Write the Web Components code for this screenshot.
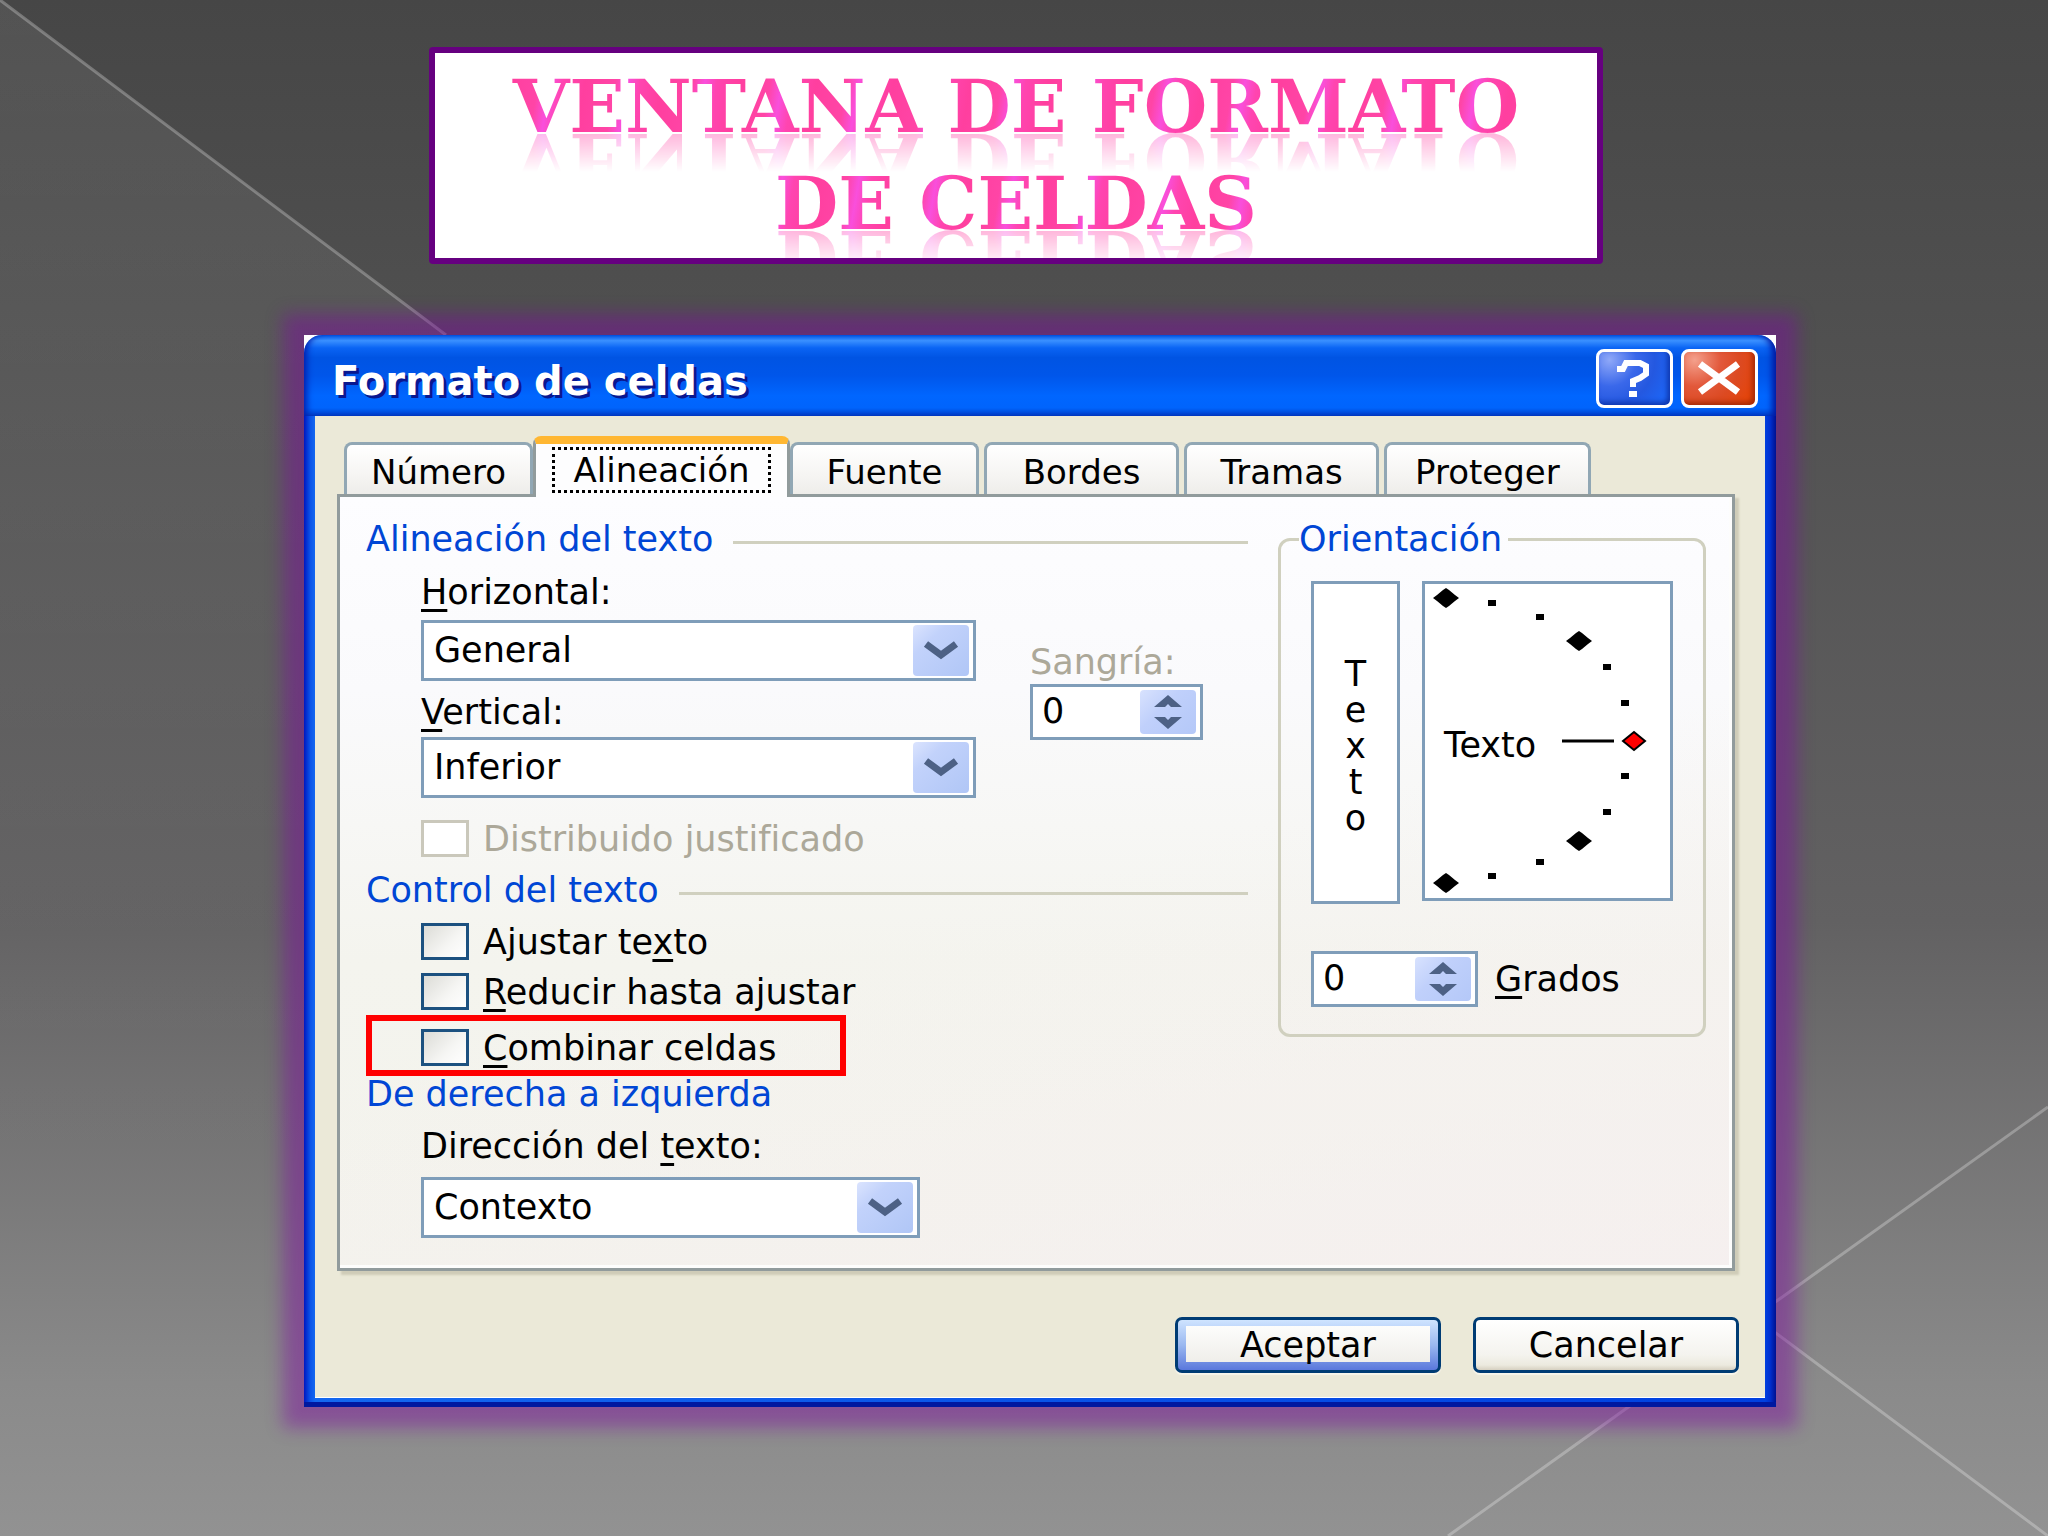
<!DOCTYPE html>
<html lang="es">
<head>
<meta charset="utf-8">
<meta name="viewport" content="width=device-width, initial-scale=1">
<title>Ventana de formato de celdas</title>
<style>
    body {
        margin: 0;
        font-family: "DejaVu Sans", Verdana, sans-serif;
        font-size: 35px;
        line-height: 40px;
        color: #000;
    }
</style>
</head>
<body>
<slide-page>
    <slide-title>
        <span>VENTANA DE FORMATO</span>
        <span>DE CELDAS</span>
    </slide-title>
    <xp-dialog caption="Formato de celdas">
        <xp-tabs>
            <xp-tab slot="tab">Número</xp-tab>
            <xp-tab slot="tab" active>Alineación</xp-tab>
            <xp-tab slot="tab">Fuente</xp-tab>
            <xp-tab slot="tab" wide>Bordes</xp-tab>
            <xp-tab slot="tab" wide>Tramas</xp-tab>
            <xp-tab slot="tab" wide>Proteger</xp-tab>
            <cell-alignment></cell-alignment>
        </xp-tabs>
        <xp-button slot="action" primary>Aceptar</xp-button>
        <xp-button slot="action">Cancelar</xp-button>
    </xp-dialog>
</slide-page>

<script>
class XpElement extends HTMLElement {

    constructor() {
        super();
        this.shadowDOM = this.attachShadow({mode: "open"});
    }

    connectedCallback() {
        this.shadowDOM.innerHTML = `
            <style>
                * { box-sizing: border-box; }
                button, input, select { font: inherit; color: inherit; margin: 0; }
                ::slotted(u) { text-decoration-thickness: 3px; text-underline-offset: 5px; text-decoration-skip-ink: none; }
            </style>
            ${this.render()}`;
    }
}

class SlidePage extends XpElement {
    render() {
        return `
            <style>
                :host {
                    display: block;
                    position: relative;
                    box-sizing: border-box;
                    min-height: 100vh;
                    padding: 47px 272px 120px 304px;
                    background: linear-gradient(#464646, #4f4f4f 20%, #626162 60%, #8a8a8a 90%, #929292);
                    overflow: hidden;
                }
                .lines { position: absolute; left: 0; top: 0; width: 100%; height: 100%; }
                .content { position: relative; display: flex; flex-direction: column; gap: 71px; }
            </style>
            <svg class="lines" viewBox="0 0 2048 1536" preserveAspectRatio="none" fill="none" stroke="#fff" stroke-opacity=".27" stroke-width="3">
                <defs><linearGradient id="haze" x2="0" y2="1">
                    <stop offset="0" stop-color="#fff" stop-opacity=".07"/><stop offset="1" stop-color="#fff" stop-opacity="0"/>
                </linearGradient></defs>
                <path d="M0 0 L1600 1202 H0 Z" fill="url(#haze)" stroke="none"/>
                <path d="M0 0 L446 335 M2048 1107 L1448 1536 M1600 1202 L2048 1536"/>
            </svg>
            <div class="content"><slot></slot></div>`;
    }
}

class SlideTitle extends XpElement {
    render() {
        return `
            <style>
                :host {
                    display: block;
                    margin: 0 173px 0 125px;
                    border: 6px solid #660080;
                    border-radius: 4px;
                    padding: 5px 0 6px;
                    background: #fff;
                    overflow: hidden;
                }
                h1 {
                    margin: 0;
                    font: bold 73px/97px "DejaVu Serif", "Bookman Old Style", serif;
                    text-align: center;
                }
                /* offset folds the mirror image onto the baseline, not the line box */
                ::slotted(span) {
                    display: block;
                    color: transparent;
                    background: repeating-linear-gradient(100deg, #ff3f9f 0, #ff45a6 30px, #f94fdc 42px, #ff45b0 54px, #ff3f9f 76px);
                    -webkit-background-clip: text;
                    background-clip: text;
                    -webkit-box-reflect: below -44px linear-gradient(transparent 36px, rgba(0, 0, 0, .4) 76px);
                }
            </style>
            <h1><slot></slot></h1>`;
    }
}

class XpDialog extends XpElement {
    render() {
        return `
            <style>
                :host {
                    display: block;
                    background: #fff;
                    box-shadow: 0 0 16px 21px rgba(128, 7, 165, .43);
                }
                header {
                    display: flex;
                    align-items: center;
                    gap: 8px;
                    height: 81px;
                    padding: 6px 18px 0 28px;
                    border-radius: 18px 18px 0 0;
                    background: linear-gradient(#0058e8, #3a90ff 7%, #0a64f4 16%, #0054e3 28%, #0056ea 50%, #0066ff 75%, #0064fc 90%, #003cc4);
                    box-shadow: inset 7px 0 6px -4px #0020b0, inset -8px 0 6px -4px #0018a0;
                }
                h2 {
                    flex: 1;
                    margin: 0;
                    padding-top: 4px;
                    font-size: 40px;
                    line-height: 48px;
                    color: #fff;
                    text-shadow: 3px 3px 0 #0a1890;
                }
                header button {
                    width: 77px;
                    height: 59px;
                    padding: 0;
                    border: 3px solid #fff;
                    border-radius: 8px;
                    background: radial-gradient(circle at 15% 15%, #8fa8f8, #3a68ea 35%, #2458e0 60%, #1a6cff);
                    box-shadow: inset -3px -3px 5px #1038b0;
                }
                header button.close {
                    background: radial-gradient(circle at 15% 15%, #f4a08c, #e2583a 35%, #dc4a22 60%, #e84200);
                    box-shadow: inset -3px -3px 5px #a82c08;
                }
                header svg { display: block; width: 100%; height: 100%; }
                .frame {
                    padding: 0 11px 9px;
                    background: linear-gradient(90deg, #0018c0, #0a52e8 6px, #1468f0 11px, #0040e0 calc(100% - 11px), #0030d0 calc(100% - 6px), #001090);
                    box-shadow: inset 0 -5px 0 #0018a0;
                }
                .client {
                    padding: 20px 30px 24px 22px;
                    background: #ebe9d8;
                    border-bottom: 1px solid #fff;
                }
                footer { display: flex; justify-content: flex-end; gap: 32px; margin: 46px -4px 0 0; }
            </style>
            <header>
                <h2>${this.getAttribute("caption")}</h2>
                <button type="button" aria-label="Ayuda">
                    <svg viewBox="0 0 71 53" fill="none" stroke="#fff" stroke-width="6">
                        <path d="M18 17 H24 L27 11 H41 L47 14 V22 L41 26 L34 29 V35"/>
                        <path d="M30 42 H38"/>
                    </svg>
                </button>
                <button type="button" class="close" aria-label="Cerrar">
                    <svg viewBox="0 0 71 53" fill="none" stroke="#fff" stroke-width="7">
                        <path d="M16 12 L54 40 M54 12 L16 40"/>
                    </svg>
                </button>
            </header>
            <div class="frame">
                <div class="client">
                    <slot></slot>
                    <footer><slot name="action"></slot></footer>
                </div>
            </div>`;
    }
}

class XpButton extends XpElement {
    render() {
        return `
            <style>
                :host { display: block; width: 266px; }
                button {
                    display: block;
                    width: 100%;
                    height: 56px;
                    padding: 0;
                    border: 3px solid #003c74;
                    border-radius: 7px;
                    background: linear-gradient(#fff, #f4f3ee 70%, #eceadf 90%, #d6d0c0);
                    box-shadow: 0 2px 1px #f8f6ec;
                }
                :host([primary]) button {
                    background:
                        linear-gradient(#fdfdfc, #efeeea) 8px 6px / calc(100% - 16px) calc(100% - 14px) no-repeat,
                        linear-gradient(#cfe4ff, #9ab8f0 50%, #5a78dc);
                }
            </style>
            <button type="button"><slot></slot></button>`;
    }
}

class XpTab extends XpElement {
    render() {
        return `
            <style>
                :host { display: block; min-width: 189px; font-size: 34px; }
                :host([wide]) { min-width: 195px; }
                button {
                    display: block;
                    width: 100%;
                    height: 52px;
                    padding: 4px 24px 0;
                    border: 3px solid #91a7b4;
                    border-bottom: 0;
                    border-radius: 8px 8px 0 0;
                    background: linear-gradient(#fff, #f6f5f3 60%, #eeedea);
                }
                :host([wide]) button { padding: 4px 28px 0; }
                /* the selected tab hides its neighbours' edges and the panel border below */
                :host([active]) { position: relative; min-width: 257px; margin: 0 -5px -3px; }
                :host([active]) button {
                    height: 61px;
                    padding: 3px 16px 6px;
                    border-color: #919b9c;
                    border-top: 8px solid #ffb732;
                    border-radius: 8px 8px 0 0;
                    background: #fdfdfe;
                }
                :host([active]) span { display: block; border: 3px dotted #000; line-height: 40px; }
            </style>
            <button type="button" role="tab" aria-selected="${this.hasAttribute("active")}"><span><slot></slot></span></button>`;
    }
}

class XpTabs extends XpElement {
    render() {
        return `
            <style>
                :host { display: block; }
                .tabs { display: flex; align-items: flex-end; gap: 5px; padding-left: 7px; }
                .panel {
                    border: 3px solid #919b9c;
                    background: linear-gradient(165deg, rgba(246, 238, 240, 0) 50%, rgba(246, 238, 240, .7)), linear-gradient(#fdfdff, #fafafc 25%, #f4f4ee 60%, #f3f3ec);
                    box-shadow: inset -3px -3px 0 #fdfdfc, 4px 4px 2px #cfccb8;
                }
            </style>
            <div class="tabs" role="tablist"><slot name="tab"></slot></div>
            <div class="panel"><slot></slot></div>`;
    }
}

class XpHeading extends XpElement {
    render() {
        return `
            <style>
                :host { display: flex; align-items: center; gap: 20px; line-height: 36px; color: #0046d5; }
                h3 { margin: 0; font: inherit; white-space: nowrap; }
                i { flex: 1; height: 3px; margin-top: 6px; background: #d0d0bf; }
                :host([plain]) i { display: none; }
            </style>
            <h3><slot></slot></h3><i></i>`;
    }
}

class XpSelect extends XpElement {
    render() {
        return `
            <style>
                :host { display: block; width: 555px; }
                label { display: block; margin-bottom: var(--label-gap, 8px); }
                .box { position: relative; }
                select {
                    display: block;
                    appearance: none;
                    width: 100%;
                    height: 61px;
                    padding: 0 70px 2px 10px;
                    border: 3px solid #7f9db9;
                    border-radius: 0;
                    background: #fff;
                }
                svg { position: absolute; right: 7px; top: 5px; width: 56px; height: 51px; pointer-events: none; }
            </style>
            <label for="field"><slot></slot></label>
            <div class="box">
                <select id="field"><option>${this.getAttribute("value")}</option></select>
                <svg viewBox="0 0 56 51">
                    <defs><linearGradient id="face" x2="1" y2="1">
                        <stop offset="0" stop-color="#dbe4fe"/><stop offset=".3" stop-color="#c2d2fb"/><stop offset="1" stop-color="#b0c6f6"/>
                    </linearGradient></defs>
                    <rect width="56" height="51" rx="4" fill="url(#face)"/>
                    <path d="M13 19 L28 30 L43 19" fill="none" stroke="#4d6185" stroke-width="7"/>
                </svg>
            </div>`;
    }
}

class XpCheck extends XpElement {
    render() {
        const disabled = this.hasAttribute("disabled");
        return `
            <style>
                :host { display: block; }
                label { display: flex; align-items: center; gap: 14px; height: 37px; white-space: nowrap; }
                input {
                    appearance: none;
                    flex: none;
                    width: 48px;
                    height: 37px;
                    margin: 0;
                    border: 3px solid #1c5180;
                    background: linear-gradient(135deg, #dcdcd7, #f6f6f4 60%, #fff);
                }
                :host([disabled]) { color: #aca899; }
                :host([disabled]) input { border-color: #cac8bb; background: #fff; }
                span { padding-top: 2px; line-height: 37px; }
            </style>
            <label><input type="checkbox" ${disabled ? "disabled" : ""}><span><slot></slot></span></label>`;
    }
}

class XpSpin extends XpElement {
    render() {
        return `
            <style>
                :host { display: flex; flex-direction: column; gap: 2px; }
                :host([side]) { flex-direction: row-reverse; justify-content: flex-end; align-items: center; gap: 17px; }
                :host([disabled]) label { color: #aca899; }
                .box {
                    display: flex;
                    width: 173px;
                    height: 56px;
                    padding: 3px 4px 3px 9px;
                    border: 3px solid #7f9db9;
                    background: #fff;
                }
                :host([side]) .box { width: 167px; }
                input { flex: 1; min-width: 0; padding: 0 0 2px; border: 0; background: none; color: #000; }
                .steps {
                    display: flex;
                    flex-direction: column;
                    width: 56px;
                    border-radius: 4px;
                    background: linear-gradient(135deg, #d8e2fe, #c0d0fb 40%, #b4c8f8);
                }
                button { flex: 1; padding: 0; border: 0; background: none; }
                svg { display: block; width: 56px; height: 22px; }
            </style>
            <label for="field"><slot></slot></label>
            <div class="box">
                <input id="field" type="text" inputmode="numeric" value="0">
                <div class="steps">
                    <button type="button" aria-label="Aumentar"><svg viewBox="0 0 56 22"><path d="M28 5 L42 17 H31 L28 14 L25 17 H14 Z" fill="#4d6185"/></svg></button>
                    <button type="button" aria-label="Disminuir"><svg viewBox="0 0 56 22"><path d="M28 17 L42 5 H31 L28 8 L25 5 H14 Z" fill="#4d6185"/></svg></button>
                </div>
            </div>`;
    }
}

class OrientationDial extends XpElement {
    render() {
        const diamonds = [[24, 17], [157, 60], [157, 260], [24, 302]];
        const dots = [[70, 22], [118, 36], [185, 86], [203, 122], [203, 195], [185, 231], [118, 281], [70, 295]];
        return `
            <style>
                :host { display: block; }
                svg { display: block; width: 251px; height: 320px; background: #fff; }
                text { font-size: 35px; }
            </style>
            <svg viewBox="0 0 251 320">
                <rect x="1.5" y="1.5" width="248" height="317" fill="none" stroke="#7f9db9" stroke-width="3"/>
                ${diamonds.map(([x, y]) => `<path transform="translate(${x} ${y})" d="M-13 0 L-9 -3 L-3 -8 L0 -10 L3 -8 L9 -3 L13 0 L9 3 L3 8 L0 10 L-3 8 L-9 3 Z"/>`).join("")}
                ${dots.map(([x, y]) => `<rect x="${x - 4}" y="${y - 3}" width="8" height="6"/>`).join("")}
                <path d="M140 160 H192" stroke="#000" stroke-width="3"/>
                <path d="M201 160 L212 151 L223 160 L212 169 Z" fill="#f00" stroke="#000" stroke-width="2"/>
                <text x="22" y="176">Texto</text>
            </svg>`;
    }
}

class OrientationGroup extends XpElement {
    render() {
        return `
            <style>
                :host { display: block; }
                fieldset {
                    min-width: 0;
                    margin: 0;
                    padding: 24px 30px 27px;
                    border: 3px solid #d0d0bf;
                    border-radius: 12px;
                }
                legend { margin-left: -12px; padding: 0 6px 0 0; line-height: 36px; color: #0046d5; }
                .views { display: flex; align-items: flex-start; gap: 22px; margin-bottom: 47px; }
                .vertical {
                    display: flex;
                    flex-direction: column;
                    justify-content: center;
                    width: 89px;
                    height: 323px;
                    padding: 6px 0 0;
                    border: 3px solid #7f9db9;
                    border-radius: 0;
                    background: #fff;
                    line-height: 36px;
                    text-align: center;
                }
                .vertical span { display: block; width: 100%; }
            </style>
            <fieldset>
                <legend>Orientación</legend>
                <div class="views">
                    <button type="button" class="vertical"><span>T</span><span>e</span><span>x</span><span>t</span><span>o</span></button>
                    <orientation-dial></orientation-dial>
                </div>
                <xp-spin side><u>G</u>rados</xp-spin>
            </fieldset>`;
    }
}

class CellAlignment extends XpElement {
    render() {
        return `
            <style>
                :host { display: flex; align-items: flex-start; gap: 30px; padding: 24px 26px 30px 26px; }
                .main { flex: 1; min-width: 0; }
                .fields { display: flex; gap: 54px; margin-top: 15px; }
                .fields, .indent { padding-left: 55px; }
                .selects { display: flex; flex-direction: column; gap: 11px; }
                .fields xp-spin { margin-top: 70px; }
                .tight { --label-gap: 5px; }
                .indent { display: flex; flex-direction: column; gap: 13px; }
                .spaced { margin: 22px 0 15px; }
                .checks { margin: 15px 0 5px; }
                .marked { width: 480px; padding: 8px 0 4px 49px; border: 6px solid #f00; box-sizing: border-box; }
                .direction { margin-top: 14px; }
                .direction xp-select { width: 499px; --label-gap: 11px; }
                orientation-group { flex: none; width: 428px; }
            </style>
            <div class="main">
                <xp-heading>Alineación del texto</xp-heading>
                <div class="fields">
                    <div class="selects">
                        <xp-select value="General"><u>H</u>orizontal:</xp-select>
                        <xp-select class="tight" value="Inferior"><u>V</u>ertical:</xp-select>
                    </div>
                    <xp-spin disabled>Sangría:</xp-spin>
                </div>
                <div class="indent spaced"><xp-check disabled>Distribuido justificado</xp-check></div>
                <xp-heading>Control del texto</xp-heading>
                <div class="indent checks">
                    <xp-check>Ajustar te<u>x</u>to</xp-check>
                    <xp-check><u>R</u>educir hasta ajustar</xp-check>
                </div>
                <div class="marked"><xp-check><u>C</u>ombinar celdas</xp-check></div>
                <xp-heading plain>De derecha a izquierda</xp-heading>
                <div class="indent direction"><xp-select value="Contexto">Dirección del <u>t</u>exto:</xp-select></div>
            </div>
            <orientation-group></orientation-group>`;
    }
}

customElements.define("slide-page", SlidePage);
customElements.define("slide-title", SlideTitle);
customElements.define("xp-dialog", XpDialog);
customElements.define("xp-button", XpButton);
customElements.define("xp-tab", XpTab);
customElements.define("xp-tabs", XpTabs);
customElements.define("xp-heading", XpHeading);
customElements.define("xp-select", XpSelect);
customElements.define("xp-check", XpCheck);
customElements.define("xp-spin", XpSpin);
customElements.define("orientation-dial", OrientationDial);
customElements.define("orientation-group", OrientationGroup);
customElements.define("cell-alignment", CellAlignment);
</script>
</body>
</html>
